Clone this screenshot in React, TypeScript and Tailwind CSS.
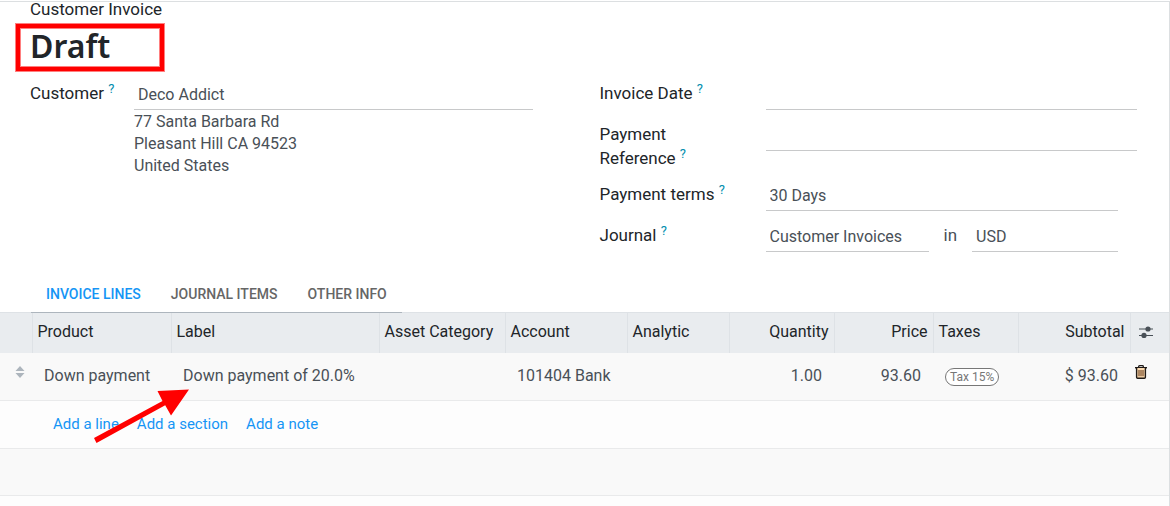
import { useState } from "react";
import type { ReactNode } from "react";

const TABS = ["Invoice Lines", "Journal Items", "Other Info"];

const COLUMNS = [
  { label: "Product", width: "w-[139px]" },
  { label: "Label", width: "" },
  { label: "Asset Category", width: "w-[126px]" },
  { label: "Account", width: "w-[122px]" },
  { label: "Analytic", width: "w-[102px]" },
  { label: "Quantity", width: "w-[105px]", numeric: true },
  { label: "Price", width: "w-[99px]", numeric: true },
  { label: "Taxes", width: "w-[85px]" },
  { label: "Subtotal", width: "w-[112px]", numeric: true },
];

const fieldClass =
  "h-[29px] min-w-0 border-b border-[#c8c9ca] bg-transparent px-1 pb-[2px] text-base text-[#495057] outline-none";

interface FieldProps {
  id: string;
  label: string;
  labelWidth: string;
  children: ReactNode;
}

function Field({ id, label, labelWidth, children }: FieldProps) {
  return (
    <div className="flex items-start">
      <label htmlFor={id} className={`shrink-0 text-[17px] leading-6 text-[#212529] ${labelWidth}`}>
        {label}{" "}
        <sup className="text-[13px] text-[#008dae]">?</sup>
      </label>
      <div className="flex min-w-0 flex-1 items-start">{children}</div>
    </div>
  );
}

function SortHandle() {
  return (
    <svg width="10" height="12" viewBox="0 0 10 12" fill="#adb5bd" className="mx-auto">
      <path d="M5 0l4.500 5H.5zM.5 7h9L5 12z" />
    </svg>
  );
}

function SlidersIcon() {
  return (
    <svg width="14" height="12" viewBox="0 0 14 12" fill="#495057">
      <path d="M0 2.4h14v1.2H0zM0 8.9h14v1.2H0z" />
      <circle cx="9" cy="3" r="2.6" />
      <circle cx="5" cy="9.4" r="2.6" />
    </svg>
  );
}

function TrashIcon() {
  return (
    <svg width="12" height="14" viewBox="0 0 12 14" fill="none" stroke="#1f1a17">
      <path d="M0 2.700h12" strokeWidth="1.400" />
      <path d="M3.700 2.500V1.500q0-.8.8-.8h3q.8 0 .8.8v1" strokeWidth="1.300" />
      <path d="M1.600 3v9.200q0 1 1 1h6.800q1 0 1-1V3" fill="#fbd9ae" strokeWidth="1.400" />
      <path d="M4 5v6.200M6 5v6.200M8 5v6.200" stroke="#5f3517" />
    </svg>
  );
}

function Arrow() {
  return (
    <svg
      width="96"
      height="56"
      viewBox="0 0 96 56"
      fill="#ff0000"
      className="pointer-events-none absolute -top-12 left-[94px]"
    >
      <path d="M0 50L68.500 13 63.500 3 95 1.500 77 27.500 71.200 17.200 2.500 55z" />
    </svg>
  );
}

export default function App() {
  const [activeTab, setActiveTab] = useState(TABS[0]);

  return (
    <div className="bg-white pt-px font-[Roboto,sans-serif] text-[#212529]">
      <main className="border-t border-r border-[#dcdfe1]">
        <header className="px-[30px]">
          <p className="text-[17px] leading-[14px]">Customer Invoice</p>
          <div className="relative mt-[7px] h-[49px]">
            <h1 className="font-['Noto_Sans',sans-serif] text-[32px] leading-[45px] font-semibold">Draft</h1>
            <div className="pointer-events-none absolute inset-y-px -left-[14px] w-[148px] border-4 border-[#ff0000] ring-1 ring-[#ff7f7f] inset-ring-1 inset-ring-[#ff7f7f]" />
          </div>
        </header>

        <div className="mt-[9px] grid grid-cols-2 gap-8 pr-8 pl-[30px]">
          <section className="pr-[35px]">
            <Field id="customer" label="Customer" labelWidth="w-[104px]">
              <input id="customer" className={`${fieldClass} flex-1`} defaultValue="Deco Addict" />
            </Field>
            <address className="ml-[104px] pt-px text-base leading-[22px] text-[#495057] not-italic">
              77 Santa Barbara Rd
              <br />
              Pleasant Hill CA 94523
              <br />
              United States
            </address>
          </section>

          <section className="flex flex-col gap-3">
            <Field id="invoice-date" label="Invoice Date" labelWidth="w-[166px]">
              <input id="invoice-date" className={`${fieldClass} flex-1`} />
            </Field>
            <Field id="reference" label="Payment Reference" labelWidth="w-[166px] pr-10">
              <input id="reference" className={`${fieldClass} flex-1`} />
            </Field>
            <Field id="terms" label="Payment terms" labelWidth="w-[166px]">
              <input id="terms" className={`${fieldClass} mr-[19px] flex-1`} defaultValue="30 Days" />
            </Field>
            <Field id="journal" label="Journal" labelWidth="w-[166px]">
              <input id="journal" className={`${fieldClass} w-[163px]`} defaultValue="Customer Invoices" />
              <span className="px-[15px] text-[17px] leading-6 text-[#495057]">in</span>
              <input aria-label="Currency" className={`${fieldClass} mr-[19px] flex-1`} defaultValue="USD" />
            </Field>
          </section>
        </div>

        <div className="relative z-10 mt-6 -mb-px ml-[31px] flex w-fit border-b border-[#adb5bd]" role="tablist">
          {TABS.map((tab) => (
            <button
              key={tab}
              role="tab"
              aria-selected={tab === activeTab}
              onClick={() => setActiveTab(tab)}
              className={`h-9 px-[15px] text-sm font-medium uppercase ${
                tab === activeTab ? "text-[#1595f5]" : "text-[#666666]"
              }`}
            >
              {tab}
            </button>
          ))}
        </div>

        <table className="w-full table-fixed border-collapse text-base text-[#495057]">
          <thead>
            <tr className="h-10 border-t border-[#dee2e6] bg-[#e9ecef] text-[#212529]">
              <th className="w-8" aria-label="Reorder" />
              {COLUMNS.map((col) => (
                <th
                  key={col.label}
                  className={`border-l border-[#dee2e6] px-[5px] pb-[2px] font-normal whitespace-nowrap ${col.width} ${
                    col.numeric ? "text-right" : "text-left"
                  }`}
                >
                  {col.label}
                </th>
              ))}
              <th className="w-[39px] border-l border-[#dee2e6] pb-[2px]">
                <button aria-label="Optional columns" className="block pl-2">
                  <SlidersIcon />
                </button>
              </th>
            </tr>
          </thead>
          <tbody>
            <tr className="h-12 border-b border-[#e9eaeb] bg-[#f9f9f9]">
              <td className="pb-2 pl-[7px]">
                <SortHandle />
              </td>
              <td className="px-3 whitespace-nowrap">Down payment</td>
              <td className="px-3 whitespace-nowrap">Down payment of 20.0%</td>
              <td />
              <td className="px-3 whitespace-nowrap">101404 Bank</td>
              <td />
              <td className="px-3 text-right">1.00</td>
              <td className="px-3 text-right">93.60</td>
              <td className="pl-3">
                <span className="inline-block rounded-full border border-[#777777] bg-white px-1 text-xs leading-4 whitespace-nowrap text-[#777777]">
                  Tax 15%
                </span>
              </td>
              <td className="px-3 text-right">$ 93.60</td>
              <td>
                <button aria-label="Delete line" className="block pb-2 pl-[5px]">
                  <TrashIcon />
                </button>
              </td>
            </tr>
            <tr className="h-12 border-b border-[#e9eaeb] bg-[#fdfdfd]">
              <td />
              <td colSpan={10} className="p-0">
                <div className="flex gap-[18px] pl-[21px] text-[15px] text-[#1595f5]">
                  <a href="#line">Add a line</a>
                  <a href="#section">Add a section</a>
                  <a href="#note">Add a note</a>
                </div>
                <div className="relative -ml-8 h-0">
                  <Arrow />
                </div>
              </td>
            </tr>
            <tr className="h-[47px] border-b border-[#e9eaeb] bg-[#f9f9f9]">
              <td colSpan={11} />
            </tr>
            <tr className="h-[10px] bg-[#fdfdfd]">
              <td colSpan={11} />
            </tr>
          </tbody>
        </table>
      </main>
    </div>
  );
}
